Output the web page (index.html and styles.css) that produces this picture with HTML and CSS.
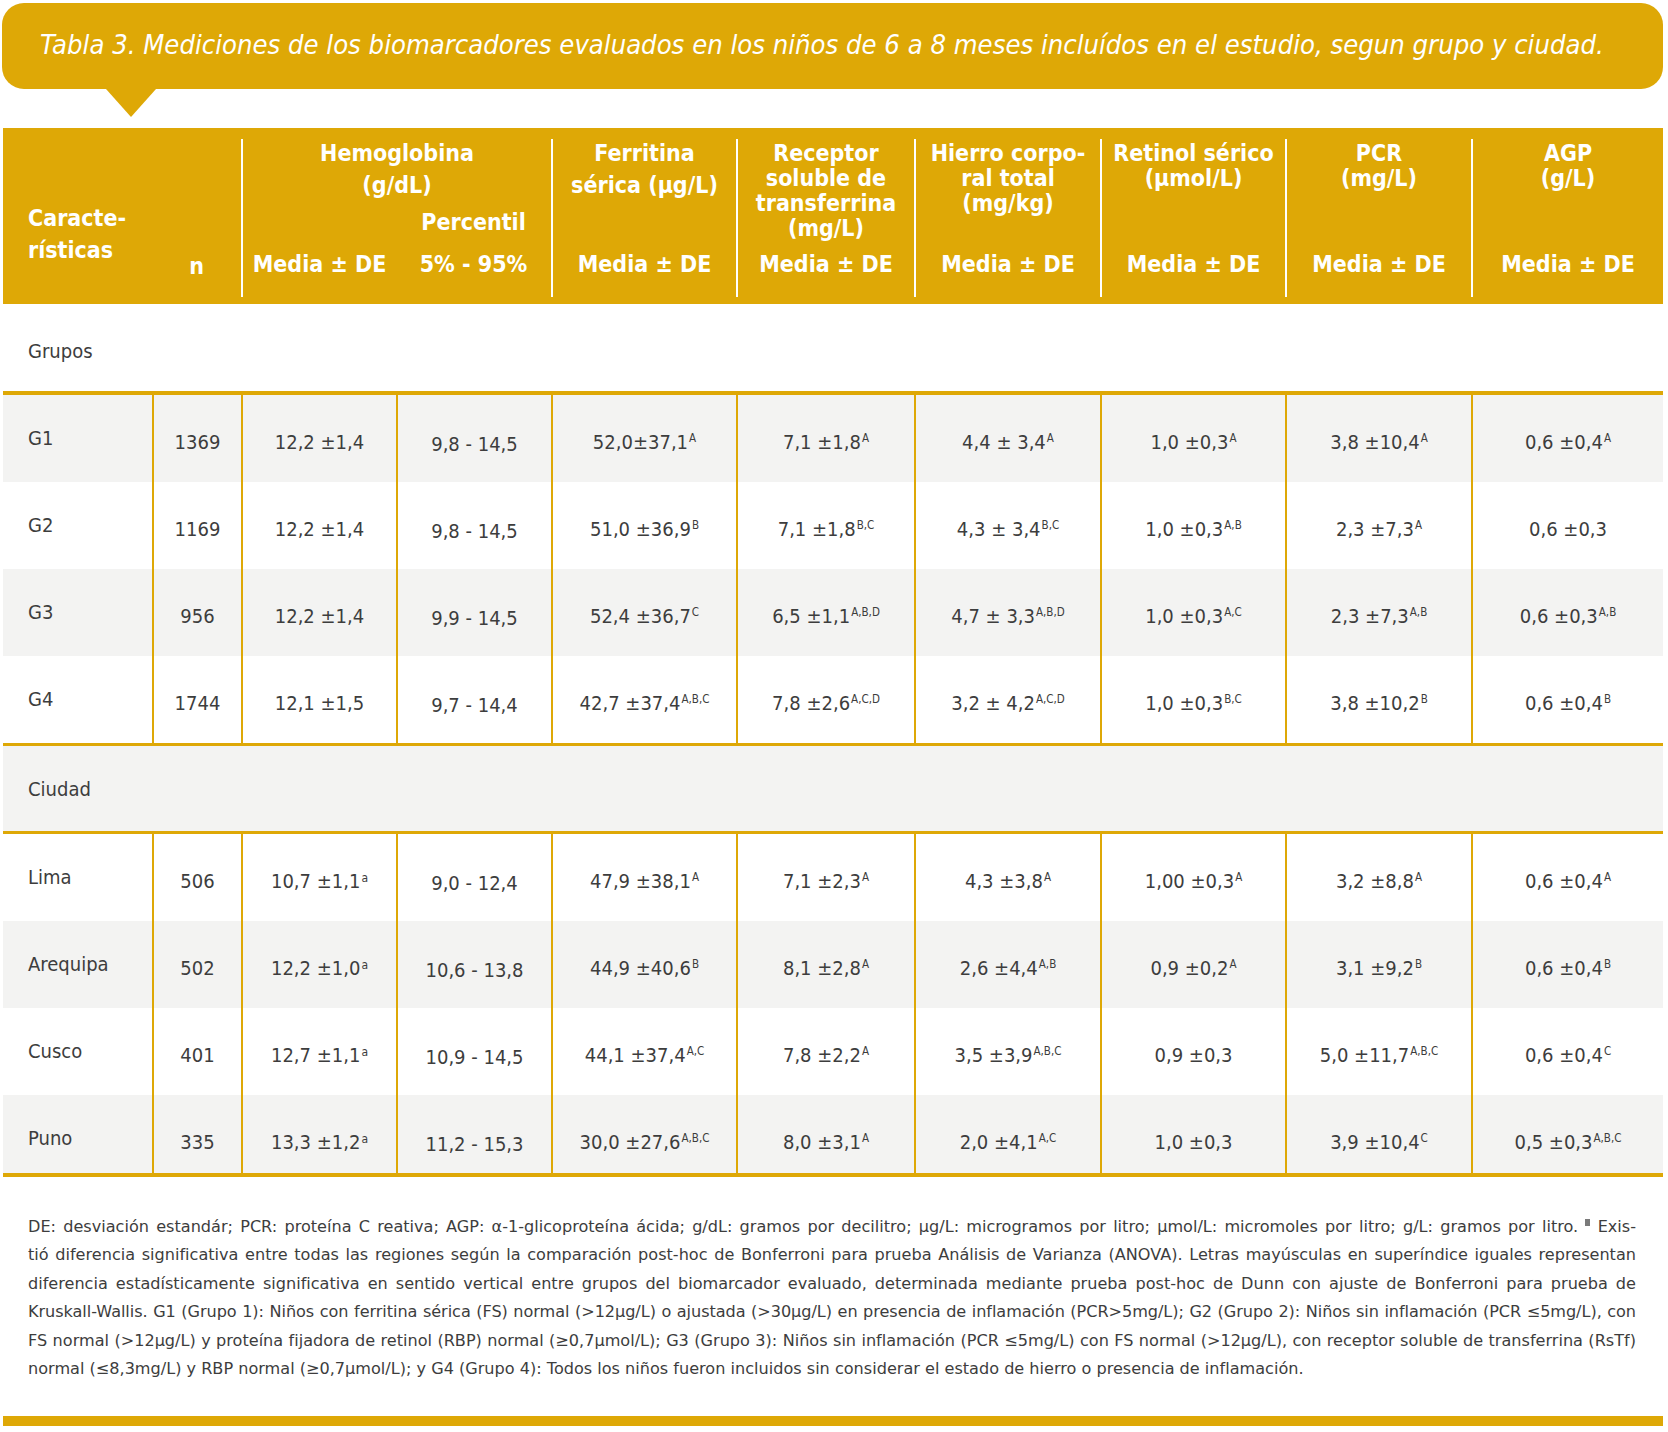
FILE: index.html
```html
<!DOCTYPE html>
<html lang="es">
<head>
<meta charset="utf-8">
<title>Tabla 3</title>
<link rel="stylesheet" href="styles.css">
</head>
<body>
<div class="page">
  <div class="caption">Tabla 3. Mediciones de los biomarcadores evaluados en los niños de 6 a 8 meses incluídos en el estudio, segun grupo y ciudad.</div>
  <div class="pointer"></div>

  <div class="tbl">
    <div class="row head">
      <div class="hcell hlabel"><div class="lines32">Caracte-<br>rísticas</div></div>
      <div class="hcell hn"><div class="nlab">n</div></div>
      <div class="hcell span2"><div class="hc">
        <div class="tt lines32 up">Hemoglobina<br>(g/dL)</div>
        <div class="sub">
          <div></div><div>Percentil</div>
          <div>Media ± DE</div><div>5% - 95%</div>
        </div>
      </div></div>
      <div class="hcell"><div class="hc">
        <div class="tt lines32 up">Ferritina<br>sérica (µg/L)</div>
        <div class="md">Media ± DE</div>
      </div></div>
      <div class="hcell"><div class="hc">
        <div class="tt">Receptor<br>soluble de<br>transferrina<br>(mg/L)</div>
        <div class="md">Media ± DE</div>
      </div></div>
      <div class="hcell"><div class="hc">
        <div class="tt">Hierro corpo-<br>ral total<br>(mg/kg)</div>
        <div class="md">Media ± DE</div>
      </div></div>
      <div class="hcell"><div class="hc">
        <div class="tt">Retinol sérico<br>(µmol/L)</div>
        <div class="md">Media ± DE</div>
      </div></div>
      <div class="hcell"><div class="hc">
        <div class="tt">PCR<br>(mg/L)</div>
        <div class="md">Media ± DE</div>
      </div></div>
      <div class="hcell"><div class="hc">
        <div class="tt">AGP<br>(g/L)</div>
        <div class="md">Media ± DE</div>
      </div></div>
    </div>

    <div class="row section"><div class="sec">Grupos</div></div>

    <div class="row data gray first">
      <div class="c lab">G1</div><div class="c">1369</div><div class="c">12,2 ±1,4</div><div class="c pc">9,8 - 14,5</div>
      <div class="c">52,0±37,1<sup>A</sup></div><div class="c">7,1 ±1,8<sup>A</sup></div><div class="c">4,4 ± 3,4<sup>A</sup></div>
      <div class="c">1,0 ±0,3<sup>A</sup></div><div class="c">3,8 ±10,4<sup>A</sup></div><div class="c">0,6 ±0,4<sup>A</sup></div>
    </div>
    <div class="row data">
      <div class="c lab">G2</div><div class="c">1169</div><div class="c">12,2 ±1,4</div><div class="c pc">9,8 - 14,5</div>
      <div class="c">51,0 ±36,9<sup>B</sup></div><div class="c">7,1 ±1,8<sup>B,C</sup></div><div class="c">4,3 ± 3,4<sup>B,C</sup></div>
      <div class="c">1,0 ±0,3<sup>A,B</sup></div><div class="c">2,3 ±7,3<sup>A</sup></div><div class="c">0,6 ±0,3</div>
    </div>
    <div class="row data gray">
      <div class="c lab">G3</div><div class="c">956</div><div class="c">12,2 ±1,4</div><div class="c pc">9,9 - 14,5</div>
      <div class="c">52,4 ±36,7<sup>C</sup></div><div class="c">6,5 ±1,1<sup>A,B,D</sup></div><div class="c">4,7 ± 3,3<sup>A,B,D</sup></div>
      <div class="c">1,0 ±0,3<sup>A,C</sup></div><div class="c">2,3 ±7,3<sup>A,B</sup></div><div class="c">0,6 ±0,3<sup>A,B</sup></div>
    </div>
    <div class="row data">
      <div class="c lab">G4</div><div class="c">1744</div><div class="c">12,1 ±1,5</div><div class="c pc">9,7 - 14,4</div>
      <div class="c">42,7 ±37,4<sup>A,B,C</sup></div><div class="c">7,8 ±2,6<sup>A,C,D</sup></div><div class="c">3,2 ± 4,2<sup>A,C,D</sup></div>
      <div class="c">1,0 ±0,3<sup>B,C</sup></div><div class="c">3,8 ±10,2<sup>B</sup></div><div class="c">0,6 ±0,4<sup>B</sup></div>
    </div>

    <div class="row section gray ruled"><div class="sec city">Ciudad</div></div>

    <div class="row data ruled">
      <div class="c lab">Lima</div><div class="c">506</div><div class="c">10,7 ±1,1<sup class="lo">a</sup></div><div class="c pc">9,0 - 12,4</div>
      <div class="c">47,9 ±38,1<sup>A</sup></div><div class="c">7,1 ±2,3<sup>A</sup></div><div class="c">4,3 ±3,8<sup>A</sup></div>
      <div class="c">1,00 ±0,3<sup>A</sup></div><div class="c">3,2 ±8,8<sup>A</sup></div><div class="c">0,6 ±0,4<sup>A</sup></div>
    </div>
    <div class="row data gray">
      <div class="c lab">Arequipa</div><div class="c">502</div><div class="c">12,2 ±1,0<sup class="lo">a</sup></div><div class="c pc">10,6 - 13,8</div>
      <div class="c">44,9 ±40,6<sup>B</sup></div><div class="c">8,1 ±2,8<sup>A</sup></div><div class="c">2,6 ±4,4<sup>A,B</sup></div>
      <div class="c">0,9 ±0,2<sup>A</sup></div><div class="c">3,1 ±9,2<sup>B</sup></div><div class="c">0,6 ±0,4<sup>B</sup></div>
    </div>
    <div class="row data">
      <div class="c lab">Cusco</div><div class="c">401</div><div class="c">12,7 ±1,1<sup class="lo">a</sup></div><div class="c pc">10,9 - 14,5</div>
      <div class="c">44,1 ±37,4<sup>A,C</sup></div><div class="c">7,8 ±2,2<sup>A</sup></div><div class="c">3,5 ±3,9<sup>A,B,C</sup></div>
      <div class="c">0,9 ±0,3</div><div class="c">5,0 ±11,7<sup>A,B,C</sup></div><div class="c">0,6 ±0,4<sup>C</sup></div>
    </div>
    <div class="row data gray last">
      <div class="c lab">Puno</div><div class="c">335</div><div class="c">13,3 ±1,2<sup class="lo">a</sup></div><div class="c pc">11,2 - 15,3</div>
      <div class="c">30,0 ±27,6<sup>A,B,C</sup></div><div class="c">8,0 ±3,1<sup>A</sup></div><div class="c">2,0 ±4,1<sup>A,C</sup></div>
      <div class="c">1,0 ±0,3</div><div class="c">3,9 ±10,4<sup>C</sup></div><div class="c">0,5 ±0,3<sup>A,B,C</sup></div>
    </div>
  </div>

  <div class="notes">
    <p class="ln">DE: desviación estandár; PCR: proteína C reativa; AGP: α-1-glicoproteína ácida; g/dL: gramos por decilitro; µg/L: microgramos por litro; µmol/L: micromoles por litro; g/L: gramos por litro. <span class="mark"></span> Exis-</p>
    <p class="ln">tió diferencia significativa entre todas las regiones según la comparación post-hoc de Bonferroni para prueba Análisis de Varianza (ANOVA). Letras mayúsculas en superíndice iguales representan</p>
    <p class="ln">diferencia estadísticamente significativa en sentido vertical entre grupos del biomarcador evaluado, determinada mediante prueba post-hoc de Dunn con ajuste de Bonferroni para prueba de</p>
    <p class="ln tight">Kruskall-Wallis. G1 (Grupo 1): Niños con ferritina sérica (FS) normal (&gt;12µg/L) o ajustada (&gt;30µg/L) en presencia de inflamación (PCR&gt;5mg/L); G2 (Grupo 2): Niños sin inflamación (PCR ≤5mg/L), con</p>
    <p class="ln">FS normal (&gt;12µg/L) y proteína fijadora de retinol (RBP) normal (≥0,7µmol/L); G3 (Grupo 3): Niños sin inflamación (PCR ≤5mg/L) con FS normal (&gt;12µg/L), con receptor soluble de transferrina (RsTf)</p>
    <p class="ln end">normal (≤8,3mg/L) y RBP normal (≥0,7µmol/L); y G4 (Grupo 4): Todos los niños fueron incluidos sin considerar el estado de hierro o presencia de inflamación.</p>
  </div>

  <div class="bar"></div>
</div>
</body>
</html>
```

FILE: styles.css
```css
* { box-sizing: border-box; }

html, body {
  margin: 0;
  padding: 0;
  background: #ffffff;
}

body {
  font-family: "DejaVu Sans Condensed", "DejaVu Sans", sans-serif;
  color: #3d3d3d;
}

.page {
  width: 1660px;
  margin-left: 3px;
  padding-top: 3px;
}

/* Caption bubble */
.caption {
  margin-left: -1px;
  width: 1661px;
  height: 86px;
  background: #dea806;
  border-radius: 22px;
  color: #ffffff;
  font-family: "DejaVu Sans Condensed", "DejaVu Sans", sans-serif;
  font-style: italic;
  font-size: 27.2px;
  display: flex;
  align-items: center;
  padding: 0 0 4px 38px;
  white-space: nowrap;
  overflow: hidden;
}

.pointer {
  width: 0;
  height: 0;
  margin-left: 103px;
  border-left: 25px solid transparent;
  border-right: 25px solid transparent;
  border-top: 28px solid #dea806;
  margin-bottom: 11px;
}

/* Table grid */
.tbl {
  width: 1660px;
}

.row {
  display: grid;
  grid-template-columns: 149px 89px 155px 155px 185px 178px 186px 185px 186px 192px;
}

/* Header */
.head {
  height: 176px;
  background: #dea806;
  color: #ffffff;
  font-weight: bold;
  font-size: 23px;
  line-height: 25px;
}

.hcell {
  padding: 11px 0 7px 0;
}

.span2 { grid-column: span 2; }

.hlabel {
  padding-left: 25px;
  padding-top: 74px;
}

.hn {
  padding-top: 126px;
  text-align: center;
}

.lines32 { line-height: 32px; }

.hc {
  height: 158px;
  border-left: 2px solid #ffffff;
  display: flex;
  flex-direction: column;
  text-align: center;
  white-space: nowrap;
}

.tt {
  padding-top: 2px;
}

.tt.up {
  padding-top: 0;
  margin-top: -2px;
}

.md {
  margin-top: auto;
  padding-bottom: 20px;
}

.sub {
  margin-top: auto;
  padding-bottom: 20px;
  display: grid;
  grid-template-columns: 153px 155px;
  row-gap: 17px;
}

/* Section rows */
.section {
  display: block;
  height: 87px;
}

.section.ruled {
  height: 88px;
  border-top: 3px solid #dea806;
}

.sec {
  padding: 35px 0 0 25px;
  font-size: 20px;
  line-height: 24px;
}

.sec.city {
  padding-top: 31px;
}

/* Data rows */
.data {
  height: 87px;
  font-size: 20px;
  line-height: 24px;
}

.data.first {
  height: 91px;
  border-top: 4px solid #dea806;
}

.data.ruled {
  height: 90px;
  border-top: 3px solid #dea806;
}

.data.last {
  height: 82px;
  border-bottom: 4px solid #dea806;
}

.gray { background: #f3f3f2; }

.c {
  border-left: 2px solid #dea806;
  text-align: center;
  padding-top: 35px;
  white-space: nowrap;
}

.c.lab {
  border-left: none;
  text-align: left;
  padding-left: 25px;
  padding-top: 31px;
}

.c.pc { padding-top: 37px; }

sup {
  font-size: 11.5px;
  line-height: 0;
  vertical-align: 7px;
  margin-left: 1px;
}

sup.lo {
  font-size: 12px;
  vertical-align: 6px;
}

/* Notes */
.notes {
  margin: 36px 0 0 25px;
  width: 1608px;
  font-family: "DejaVu Sans", sans-serif;
  font-size: 16.1px;
  line-height: 28.4px;
}

.ln {
  margin: 0;
  text-align: justify;
  text-align-last: justify;
  white-space: nowrap;
}

.ln.tight {
  letter-spacing: -0.05px;
}

.ln.end {
  text-align-last: left;
}

.mark {
  display: inline-block;
  width: 5px;
  height: 7px;
  background: #7a7a7a;
  vertical-align: 6px;
}

.bar {
  margin-top: 33px;
  height: 10px;
  background: #dea806;
}
```
